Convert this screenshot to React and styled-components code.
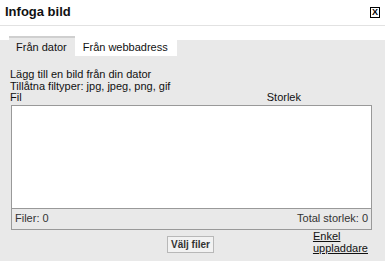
import React from "react";
import styled, { createGlobalStyle } from "styled-components";

const Global = createGlobalStyle`
  html, body { margin: 0; padding: 0; background: #e9e9e9; }
  body { font-family: "Liberation Sans", Arial, sans-serif; color: #111; }
`;

const Dialog = styled.div`
  width: 385px;
  height: 261px;
  display: flex;
  flex-direction: column;
  background: #e9e9e9;
  overflow: hidden;
`;

const Header = styled.div`
  height: 26px;
  background: #fff;
  border-bottom: 1px solid #e2e2e2;
  display: flex;
  align-items: center;
  justify-content: space-between;
  padding: 0 5px;
  box-sizing: border-box;
  flex: none;
`;

const Title = styled.h1`
  margin: 0;
  font-size: 13px;
  font-weight: bold;
  color: #111;
  margin-top: -2px;
`;

const Close = styled.button`
  width: 10px;
  height: 11px;
  padding: 0;
  border: 1px solid #000;
  background: #fff;
  font: bold 9px "Liberation Sans", Arial, sans-serif;
  line-height: 9px;
  color: #000;
  margin-right: 0;
  margin-top: -1px;
`;

const TabBar = styled.div`
  height: 30px;
  box-sizing: border-box;
  padding: 10px 0 0 9px;
  display: flex;
  align-items: stretch;
  background: linear-gradient(to bottom, #fff 0, #fff 14px, #e9e9e9 14px);
  flex: none;
`;

const Tab = styled.div`
  box-sizing: border-box;
  display: flex;
  align-items: center;
  font-size: 11px;
  color: #111;
  background: ${(p) => (p.$active ? "#e9e9e9" : "#fff")};
  border-top: 2px solid ${(p) => (p.$active ? "#cfcfcf" : "#fff")};
  padding-left: ${(p) => (p.$active ? "7px" : "8px")};
  padding-right: ${(p) => (p.$active ? "8px" : "9px")};
`;

const Body = styled.div`
  padding: 13px 13px 0 10px;
  display: flex;
  flex-direction: column;
  font-size: 11px;
  line-height: 11.5px;
`;

const Line = styled.div``;

const ColHeads = styled.div`
  display: flex;
  justify-content: space-between;
  padding-right: 71px;
`;

const FileBox = styled.div`
  margin-top: 1px;
  margin-left: 1px;
  border: 1px solid #999;
  height: 125px;
  box-sizing: border-box;
  display: flex;
  flex-direction: column;
`;

const FileList = styled.div`
  flex: 1;
  background: #fff;
  border-bottom: 1px solid #999;
`;

const Summary = styled.div`
  height: 20px;
  display: flex;
  align-items: center;
  justify-content: space-between;
  padding: 0 3px 0 3px;
  color: #333;
`;

const Actions = styled.div`
  display: flex;
  align-items: flex-start;
  margin-top: 2px;
`;

const Spacer = styled.div`
  flex: 1;
`;

const Button = styled.button`
  margin-top: 4px;
  margin-left: 157px;
  padding: 0 3px;
  height: 17px;
  border: 1px solid #b8b8b8;
  background: #f2f2f2;
  font: bold 10px "Liberation Sans", Arial, sans-serif;
  color: #333;
`;

const Link = styled.a`
  color: #111;
  text-decoration: underline;
  font-size: 11px;
  line-height: 12px;
  margin-right: 4px;
  margin-top: -2px;
`;

export default function App() {
  return (
    <Dialog>
      <Global />
      <Header>
        <Title>Infoga bild</Title>
        <Close>X</Close>
      </Header>
      <TabBar>
        <Tab $active>Från dator</Tab>
        <Tab>Från webbadress</Tab>
      </TabBar>
      <Body>
        <Line>Lägg till en bild från din dator</Line>
        <Line>Tillåtna filtyper: jpg, jpeg, png, gif</Line>
        <ColHeads>
          <span>Fil</span>
          <span>Storlek</span>
        </ColHeads>
        <FileBox>
          <FileList />
          <Summary>
            <span>Filer: 0</span>
            <span>Total storlek: 0</span>
          </Summary>
        </FileBox>
        <Actions>
          <Button>Välj filer</Button>
          <Spacer />
          <Link href="#">
            Enkel
            <br />
            uppladdare
          </Link>
        </Actions>
      </Body>
    </Dialog>
  );
}
